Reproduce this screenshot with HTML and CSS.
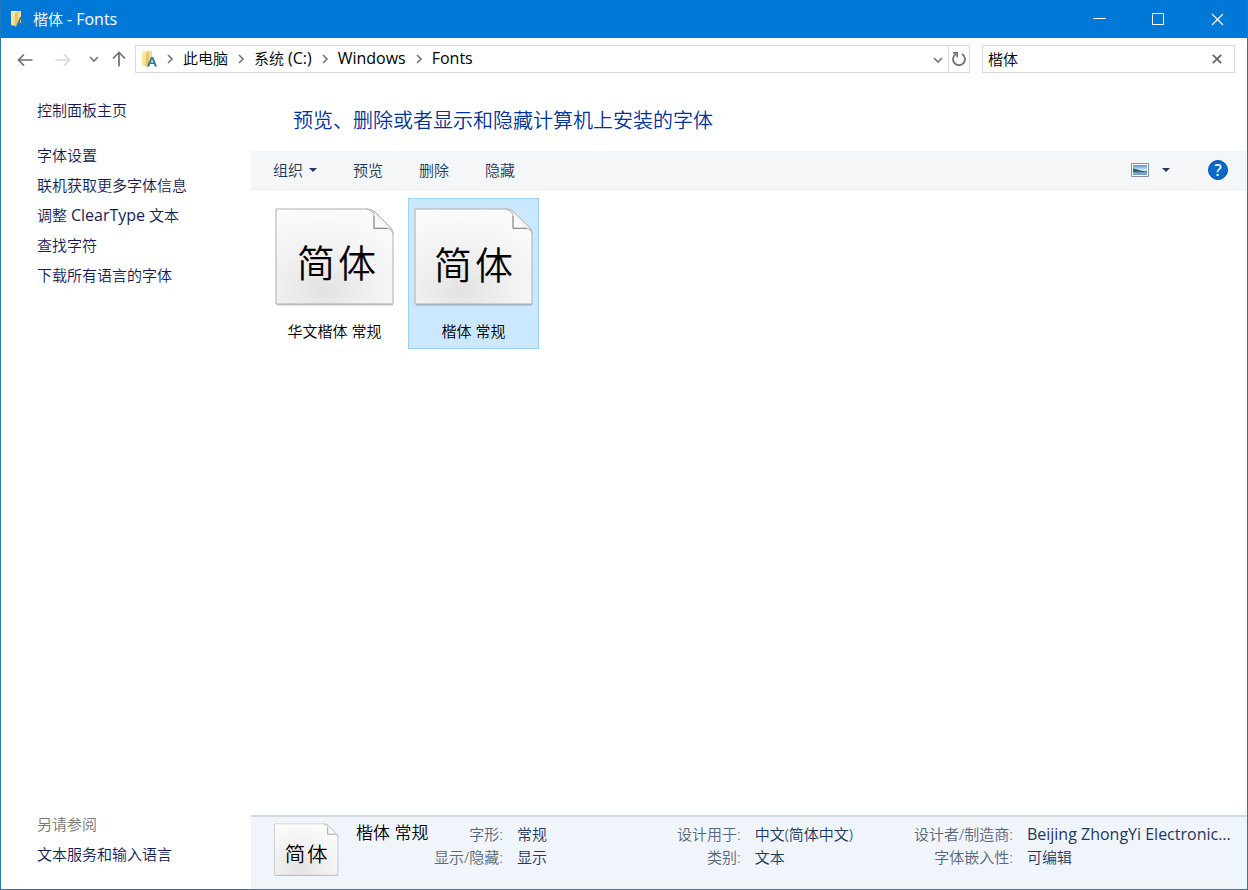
FILE: index.html
```html
<!DOCTYPE html>
<html lang="zh-CN">
<head>
<meta charset="utf-8">
<title>楷体 - Fonts</title>
<link rel="stylesheet" href="styles.css">
</head>
<body>
<svg class="defs" width="0" height="0" aria-hidden="true">
  <defs>
    <linearGradient id="folderFill" x1="0" y1="0" x2="1" y2="1"><stop offset="0" stop-color="#fff0bd"/><stop offset="1" stop-color="#f5cf6c"/></linearGradient>
    <radialGradient id="paper" cx="0.4" cy="0.85" r="0.9"><stop offset="0" stop-color="#e3e3e3"/><stop offset="0.5" stop-color="#f2f2f2"/><stop offset="1" stop-color="#fcfcfc"/></radialGradient>
    <linearGradient id="fold" x1="0" y1="1" x2="0.7" y2="0.3"><stop offset="0" stop-color="#ffffff"/><stop offset="0.7" stop-color="#fafafa"/><stop offset="1" stop-color="#d2d2d2"/></linearGradient>
    <linearGradient id="sky" x1="0" y1="0" x2="0" y2="1"><stop offset="0" stop-color="#4e93d0"/><stop offset="0.5" stop-color="#d9edf8"/><stop offset="1" stop-color="#74a9cc"/></linearGradient>
    <symbol id="folder" viewBox="0 0 16 18">
      <path d="M5 1h6v12H5z" fill="#f6dc93"/>
      <path d="M1 1h4l1.500 2v13.500L1 15z" fill="url(#folderFill)"/>
      <path d="M5 3.500l3-1.500v12l-3 3z" fill="#ecc162"/>
      <path d="M6 16.500L10 7h2.200L16 16.500h-2.200l-.9-2.400H9.200L8.300 16.500zM9.800 12.500h2.500L11 9z" fill="#257e9e"/>
    </symbol>
    <symbol id="page" viewBox="0 0 120 99">
      <path d="M2 3h95l21 21v73.500H2z" fill="#000" opacity="0.22"/>
      <path d="M1 1H92q5 0 9 4l14 14q3 3 3 7v70H1z" fill="url(#paper)" stroke="#adadad"/>
      <path d="M92 1q7 2 7 8v11h11q6 0 8 5-1-4-3-6L101 5Q97 1 92 1z" fill="url(#fold)" stroke="#b4b4b4"/>
      <path d="M99 8v12.500h14" fill="none" stroke="#8c8c8c"/>
    </symbol>
    <symbol id="crumb" viewBox="0 0 6 10"><path d="M1 1l4 4-4 4" fill="none" stroke="#777" stroke-width="1.600"/></symbol>
    <symbol id="down" viewBox="0 0 10 7"><path d="M1 1l4 4 4-4" fill="none" stroke="#777" stroke-width="1.700"/></symbol>
  </defs>
</svg>

<div class="window">
  <header class="titlebar">
    <svg class="folder" aria-hidden="true"><use href="#folder"/></svg>
    <h1 class="title">楷体 <span class="latin">- Fonts</span></h1>
    <div class="controls">
      <button aria-label="最小化"><svg width="13" height="13"><path d="M0 5.500h13" stroke="#fff"/></svg></button>
      <button aria-label="最大化"><svg width="13" height="13"><path d="M.5.5h11v11H.5z" fill="none" stroke="#fff"/></svg></button>
      <button aria-label="关闭"><svg width="13" height="13"><path d="M1 1l11 11M12 1L1 12" stroke="#fff" stroke-width="1.200"/></svg></button>
    </div>
  </header>

  <nav class="navbar" aria-label="导航">
    <div class="history">
      <button class="arrow" aria-label="后退"><svg width="16" height="14"><path d="M15.500 8H1.500M7 2.500L1.500 8 7 13.500" fill="none" stroke="#707070" stroke-width="1.700"/></svg></button>
      <button class="arrow" aria-label="前进"><svg width="16" height="14"><path d="M.5 8h14M9 2.500L14.500 8 9 13.500" fill="none" stroke="#d6d6d6" stroke-width="1.500"/></svg></button>
      <button class="recent" aria-label="最近位置"><svg width="10" height="7"><use href="#down"/></svg></button>
      <button class="up" aria-label="上移"><svg width="14" height="16"><path d="M7 15.500V1.500M1 7.500l6-6 6 6" fill="none" stroke="#707070" stroke-width="1.700"/></svg></button>
    </div>
    <div class="address">
      <svg class="folder" aria-hidden="true"><use href="#folder"/></svg>
      <div class="crumbs">
        <svg class="sep" aria-hidden="true"><use href="#crumb"/></svg><a href="#">此电脑</a>
        <svg class="sep" aria-hidden="true"><use href="#crumb"/></svg><a href="#">系统 <span class="latin">(C:)</span></a>
        <svg class="sep" aria-hidden="true"><use href="#crumb"/></svg><a class="latin" href="#">Windows</a>
        <svg class="sep" aria-hidden="true"><use href="#crumb"/></svg><a class="latin" href="#">Fonts</a>
      </div>
      <button class="drop" aria-label="展开地址"><svg width="10" height="7"><use href="#down"/></svg></button>
      <button class="refresh" aria-label="刷新"><svg width="16" height="16"><path d="M11 3A6 6 0 1 1 5 3" fill="none" stroke="#777" stroke-width="1.900"/><path d="M2 1.800h4.200v4.700" fill="none" stroke="#777" stroke-width="1.700"/></svg></button>
    </div>
    <div class="search">
      <input type="text" value="楷体" aria-label="搜索">
      <button aria-label="清除"><svg width="10" height="10"><path d="M.8.8l8.400 8.400M9.200.8L.8 9.200" stroke="#666" stroke-width="1.800"/></svg></button>
    </div>
  </nav>

  <div class="body">
    <aside class="sidebar">
      <a class="home" href="#">控制面板主页</a>
      <a href="#">字体设置</a>
      <a href="#">联机获取更多字体信息</a>
      <a href="#">调整 <span class="latin">ClearType</span> 文本</a>
      <a href="#">查找字符</a>
      <a href="#">下载所有语言的字体</a>
      <div class="see-also">
        <span>另请参阅</span>
        <a href="#">文本服务和输入语言</a>
      </div>
    </aside>

    <main class="main">
      <h2 class="heading">预览、删除或者显示和隐藏计算机上安装的字体</h2>
      <div class="toolbar">
        <button>组织<span class="caret"></span></button>
        <button>预览</button>
        <button>删除</button>
        <button>隐藏</button>
        <div class="tools">
          <button aria-label="视图"><svg width="18" height="14"><path d="M.5.5h17v13H.5z" fill="#fff" stroke="#8290ae"/><path d="M2 2h14v10H2z" fill="url(#sky)"/><path d="M2 5.500q3 0 6 1.500t8 1v1.500H2z" fill="#345e6c"/><path d="M2 9q7 1 14-.5V12H2z" fill="#6fa7ca"/></svg></button>
          <button class="views" aria-label="更多视图"><span class="caret"></span></button>
          <button class="help" aria-label="帮助">?</button>
        </div>
      </div>

      <div class="files">
        <button class="file">
          <svg class="thumb" viewBox="0 0 120 99" aria-hidden="true"><use href="#page"/><text x="22" y="69">简</text><text x="63" y="69">体</text></svg>
          <span>华文楷体 常规</span>
        </button>
        <button class="file selected">
          <svg class="thumb" viewBox="0 0 120 99" aria-hidden="true"><use href="#page"/><text x="20" y="71">简</text><text x="61" y="71">体</text></svg>
          <span>楷体 常规</span>
        </button>
      </div>

      <section class="details" aria-label="详细信息">
        <svg class="preview" viewBox="0 0 120 99" aria-hidden="true"><use href="#page"/><text x="20" y="72">简</text><text x="61" y="72">体</text></svg>
        <strong class="name">楷体 常规</strong>
        <dl><dt>字形:</dt><dd>常规</dd><dt>显示/隐藏:</dt><dd>显示</dd></dl>
        <dl><dt>设计用于:</dt><dd>中文(简体中文)</dd><dt>类别:</dt><dd>文本</dd></dl>
        <dl><dt>设计者/制造商:</dt><dd class="latin">Beijing ZhongYi Electronic...</dd><dt>字体嵌入性:</dt><dd>可编辑</dd></dl>
      </section>
    </main>
  </div>
</div>
</body>
</html>
```
FILE: styles.css
```css
* { box-sizing: border-box; }
body {
  margin: 0;
  font: 350 15px/20px "Noto Sans", "Noto Sans CJK SC", sans-serif;
  color: #000;
}
button, input { font: inherit; color: inherit; }
button { display: flex; align-items: center; justify-content: center; padding: 0; border: 0; background: none; }
a { color: inherit; text-decoration: none; }
svg { display: block; flex: none; }
.defs { position: absolute; }
.latin { font-family: "Open Sans", sans-serif; font-size: 16px; font-weight: 400; }

.window {
  display: flex;
  flex-direction: column;
  min-height: 100vh;
  border: 1px solid #2478bb;
  border-top: 0;
  background: #fff;
}

.titlebar { display: flex; align-items: center; height: 38px; padding-left: 9px; background: #0078d7; color: #fff; }
.folder { width: 16px; height: 18px; }
.title { flex: 1; margin: 0 0 0 7px; font-size: 15px; font-weight: inherit; }
.controls { display: flex; align-self: stretch; }
.controls button { width: 59px; }

.navbar { display: flex; padding: 7px 12px 8px 12px; }
.history { display: flex; width: 122px; padding-left: 4px; }
.arrow { width: 16px; margin-right: 22px; }
.recent { width: 10px; margin-left: -4px; margin-right: 13px; }
.up { width: 14px; }
.address { display: flex; align-items: center; flex: 1; height: 28px; padding-left: 5px; border: 1px solid #d9d9d9; }
.crumbs { display: flex; align-items: center; flex: 1; gap: 10px; padding-left: 10px; }
.crumbs a { padding-bottom: 2px; }
.sep { width: 6px; height: 10px; }
.drop { width: 20px; align-self: stretch; padding-top: 2px; }
.refresh { width: 21px; align-self: stretch; border-left: 1px solid #d9d9d9; }
.search { display: flex; width: 253px; height: 28px; margin-left: 12px; border: 1px solid #d9d9d9; }
.search input { flex: 1; min-width: 0; padding: 0 5px; border: 0; outline: 0; background: none; }
.search button { width: 34px; }

.body { display: flex; flex: 1; }
.sidebar { display: flex; flex-direction: column; width: 250px; padding: 14px 0 20px 36px; color: #151c55; line-height: 30px; }
.sidebar .latin { line-height: 20px; }
.home { margin-bottom: 15px; }
.see-also { display: flex; flex-direction: column; margin-top: auto; }
.see-also span { color: #777; }

.main { display: flex; flex-direction: column; flex: 1; min-width: 0; }
.heading { margin: 0; padding: 24px 0 14px 42px; color: #003399; font-size: 20px; font-weight: inherit; line-height: 32px; }
.toolbar { display: flex; align-items: center; gap: 36px; height: 39px; padding: 0 19px 0 22px; background: #f5f6f7; border-bottom: 1px solid #eaebec; color: #1e395b; }
.caret { border: 4px solid transparent; border-top-color: #1e395b; border-bottom: 0; }
.toolbar button:first-child .caret { margin-left: 6px; }
.tools { display: flex; align-items: center; margin-left: auto; }
.views { width: 34px; }
.toolbar .help { width: 20px; height: 20px; margin-left: 25px; border: 1px solid #0755a8; border-radius: 50%; background: #0b69c7; color: #fff; font-size: 16px; font-weight: 500; }

.files { display: flex; align-items: flex-start; flex: 1; gap: 8px; padding: 8px 18px; }
.file { flex-direction: column; width: 131px; height: 151px; padding-top: 2px; border: 1px solid transparent; }
.file span { margin-top: 14px; }
.selected { border-color: #99d1ff; background: #cce8ff; }
.thumb { width: 120px; height: 99px; }
.thumb text, .preview text { font: 350 38px "Noto Sans CJK SC", sans-serif; }

.details {
  display: grid;
  grid-template-columns: 64px 78px 243fr 237fr 351fr;
  align-items: start;
  height: 74px;
  padding: 6px 0 0 23px;
  border-top: 2px solid #d3d9df;
  background: #f0f4fb;
}
.preview { width: 65px; height: 54px; }
.name { padding-left: 18px; font-size: 17px; font-weight: inherit; white-space: nowrap; }
.details dl { display: grid; grid-template-columns: max-content 1fr; column-gap: 14px; margin: 0; padding-left: 18px; line-height: 23px; white-space: nowrap; }
.details dt { color: #5a6779; text-align: right; }
.details dd { margin: 0; color: #1e395b; }
```
